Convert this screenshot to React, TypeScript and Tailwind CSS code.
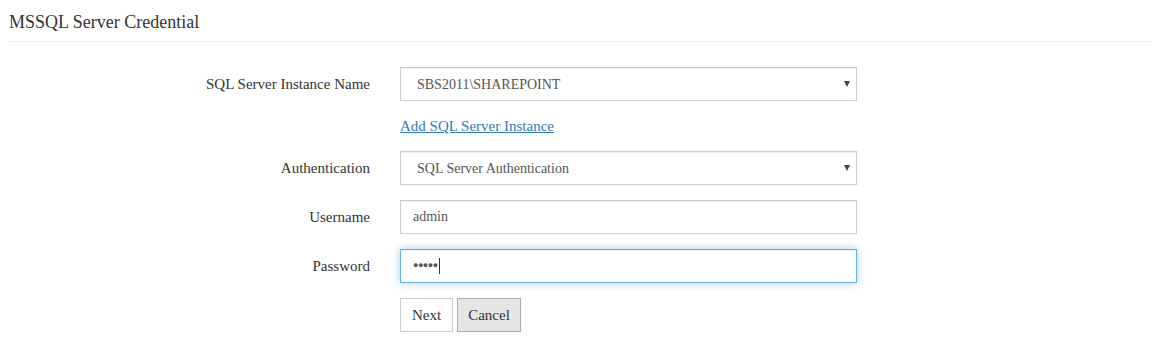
import { ReactNode } from "react";

function Row({ label, children }: { label?: string; children: ReactNode }) {
  return (
    <div className="flex items-center mb-[15px]">
      <label className="w-[370px] text-right text-[15px] text-[#333]">{label}</label>
      <div className="ml-[30px] w-[457px]">{children}</div>
    </div>
  );
}

function Select({ value }: { value: string }) {
  return (
    <div className="relative">
      <select
        defaultValue={value}
        className="w-full h-[34px] appearance-none bg-white border border-[#ccc] pl-4 text-[14px] text-[#555] outline-none shadow-[inset_0_1px_1px_rgba(0,0,0,0.075)]"
      >
        <option>{value}</option>
      </select>
      <span className="absolute right-[7px] top-[14px] w-0 h-0 border-l-[3.5px] border-r-[3.5px] border-t-[6px] border-l-transparent border-r-transparent border-t-[#444]" />
    </div>
  );
}

export default function App() {
  return (
    <div className="bg-white min-h-[358px] pl-[10px] pr-[7px] font-['Liberation_Serif',serif]">
      <div className="pt-[12px] pb-[9px] border-b border-[#eee]">
        <h3 className="-ml-px text-[18px] leading-[20px] text-[#333]">MSSQL Server Credential</h3>
      </div>

      <form className="mt-[25px] -ml-[10px]" onSubmit={(e) => e.preventDefault()}>
        <Row label="SQL Server Instance Name">
          <Select value="SBS2011\SHAREPOINT" />
        </Row>

        <Row>
          <a href="#" className="block h-[20px] leading-[20px] text-[15px] text-[#337ab7] underline">
            Add SQL Server Instance
          </a>
        </Row>

        <Row label="Authentication">
          <Select value="SQL Server Authentication" />
        </Row>

        <Row label="Username">
          <input
            type="text"
            defaultValue="admin"
            className="w-full h-[34px] bg-white border border-[#ccc] px-3 text-[14px] text-[#555] outline-none shadow-[inset_0_1px_1px_rgba(0,0,0,0.075)]"
          />
        </Row>

        <Row label="Password">
          <div className="w-full h-[34px] flex items-center bg-white border border-[#66afe9] px-3 shadow-[inset_0_1px_1px_rgba(0,0,0,0.075),0_0_8px_rgba(102,175,233,0.6)]">
            <span className="text-[9px] tracking-[-0.5px] text-[#555]">●●●●●</span>
            <span className="ml-[1px] w-px h-[16px] bg-[#333]" />
          </div>
        </Row>

        <Row>
          <div className="flex gap-1">
            <button className="h-[34px] px-[11px] bg-white border border-[#ccc] text-[15px] text-[#333]">Next</button>
            <button className="h-[34px] px-[10px] bg-[#e6e6e6] border border-[#adadad] text-[15px] text-[#333]">Cancel</button>
          </div>
        </Row>
      </form>
    </div>
  );
}
